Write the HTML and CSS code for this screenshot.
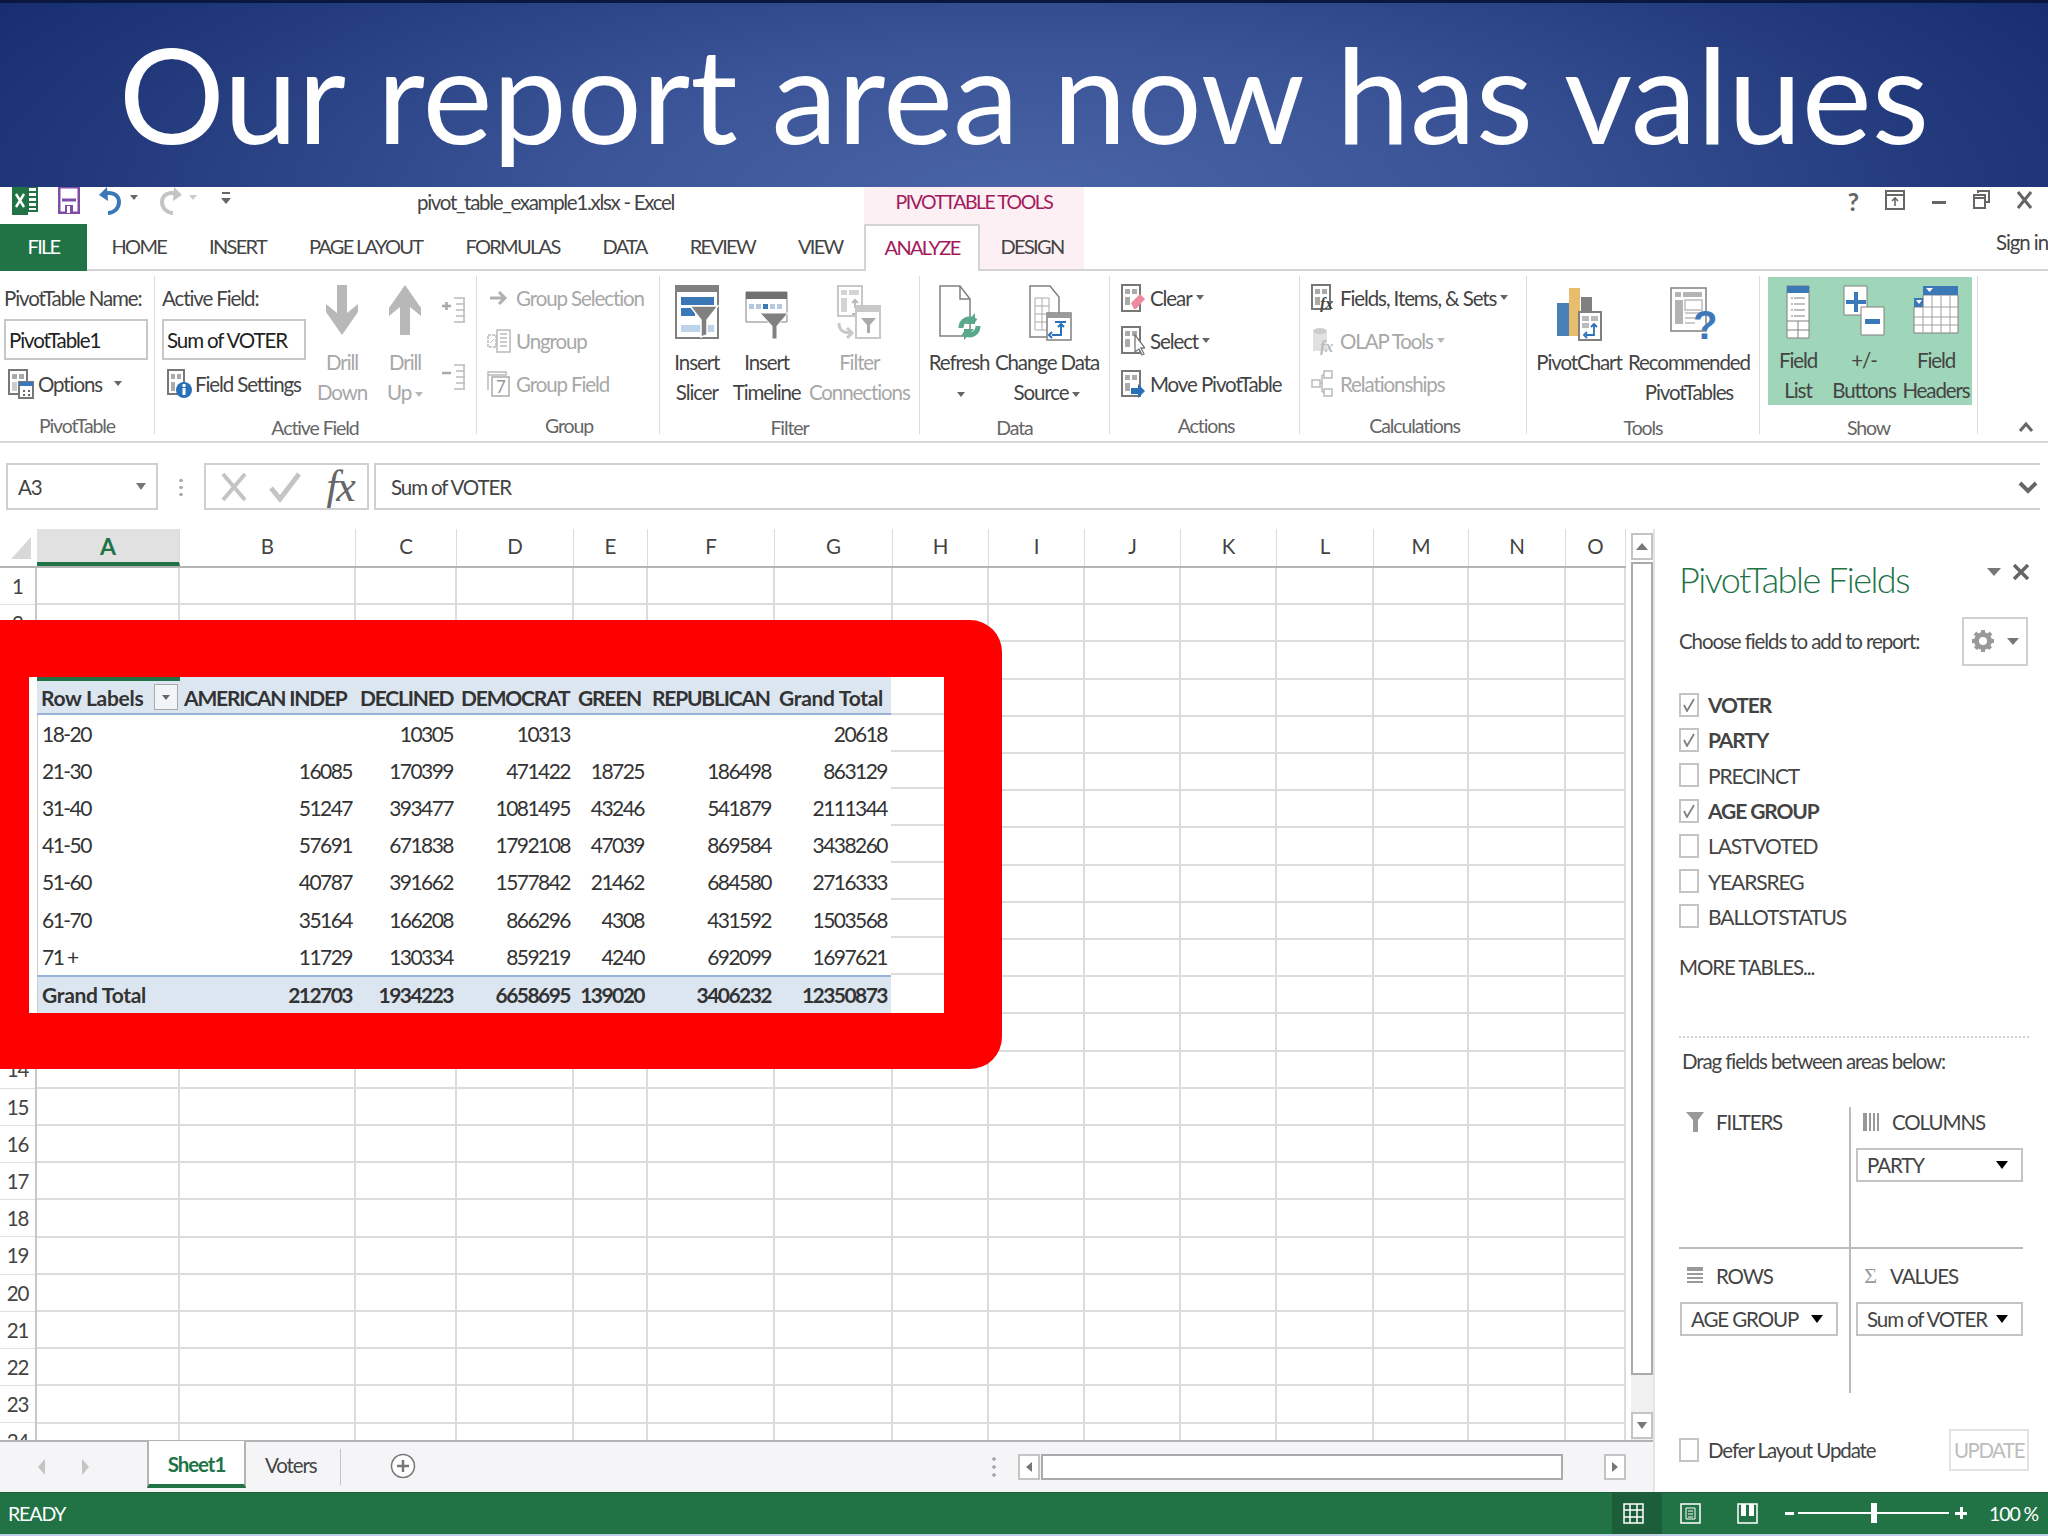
FILE: index.html
```html
<!DOCTYPE html>
<html lang="en">
<head>
    <meta charset="UTF-8">
    <title>Our report area now has values</title>
    <link rel="stylesheet" href="styles.css">
</head>
<body>
<div id="slide">
    <header class="banner"><h1>Our report area now has values</h1></header>

    <div class="titlebar">
        <div class="qat">
            <svg class="qat-excel" width="26" height="28" viewBox="0 0 26 28"><path d="M0 0h16v28H0z" fill="#217346"/><path d="M16 0h9v24h-9z" fill="#fff" stroke="#217346" stroke-width="2"/><path d="M17 5h7M17 10h7M17 15h7M17 20h7" stroke="#217346" stroke-width="2"/><path d="M4 7l8 13M12 7L4 20" stroke="#fff" stroke-width="2.4"/></svg>
            <svg class="qat-save" width="22" height="27" viewBox="0 0 22 27"><path d="M1 0h20v26H1z" fill="none" stroke="#7f4da8" stroke-width="3"/><path d="M4 13h14" stroke="#7f4da8" stroke-width="3"/><path d="M7 18h8v8H7z" fill="#7f4da8"/><path d="M9 19h3v7H9z" fill="#fff"/></svg>
            <svg class="qat-undo" width="24" height="30" viewBox="0 0 24 30"><path d="M5 7c8-3 15 1 15 8s-6 11-11 11" fill="none" stroke="#3b78b8" stroke-width="4"/><path d="M8 0L0 8l9 6z" fill="#3b78b8"/></svg>
            <span class="tri-sm"></span>
            <svg class="qat-redo" width="24" height="30" viewBox="0 0 24 30"><path d="M19 7c-8-3-15 1-15 8s6 11 11 11" fill="none" stroke="#c4c4c4" stroke-width="4"/><path d="M16 0l8 8-9 6z" fill="#c4c4c4"/></svg>
            <span class="tri-sm tri-light"></span>
            <svg class="qat-more" width="10" height="14" viewBox="0 0 10 14"><path d="M1 1h8v2H1zM0 7h10l-5 6z" fill="#666"/></svg>
        </div>
        <div class="doc-title">pivot_table_example1.xlsx - Excel</div>
        <div class="context-title">PIVOTTABLE TOOLS</div>
        <div class="win-controls">
            <span class="help">?</span>
            <svg width="20" height="20" viewBox="0 0 20 20"><path d="M1 1h18v18H1zM1 5h18" fill="none" stroke="#666" stroke-width="2"/><path d="M10 16V9M7 11l3-3 3 3" fill="none" stroke="#666" stroke-width="1.6"/></svg>
            <svg width="14" height="20" viewBox="0 0 14 20"><path d="M0 11h14v3H0z" fill="#666"/></svg>
            <svg width="17" height="20" viewBox="0 0 17 20"><path d="M5 3V1h11v11h-3M1 5h11v13H1zM1 8h11" fill="none" stroke="#666" stroke-width="2"/></svg>
            <svg width="15" height="20" viewBox="0 0 15 20"><path d="M1 2l13 16M14 2L1 18" stroke="#666" stroke-width="3"/></svg>
        </div>
    </div>

    <nav class="tabs">
        <span class="tab tab-file">FILE</span>
        <span class="tab">HOME</span>
        <span class="tab">INSERT</span>
        <span class="tab">PAGE LAYOUT</span>
        <span class="tab">FORMULAS</span>
        <span class="tab">DATA</span>
        <span class="tab">REVIEW</span>
        <span class="tab">VIEW</span>
        <span class="tab tab-analyze">ANALYZE</span>
        <span class="tab tab-design">DESIGN</span>
        <span class="sign-in">Sign in</span>
    </nav>

    <section class="ribbon">
        <div class="group g-pivot">
            <div class="group-body stack">
                <div class="row">PivotTable Name:</div>
                <div class="field-box">PivotTable1</div>
                <div class="row row-options">
                    <svg width="26" height="30" viewBox="0 0 26 30"><path d="M1 1h18v24H1z" fill="#fff" stroke="#777" stroke-width="2"/><path d="M4 5h5v5H4zM11 5h5v5h-5z" fill="#aaa"/><path d="M4 13h5v9H4z" fill="#ccc"/><path d="M11 13h14v16H11z" fill="#fff" stroke="#777" stroke-width="2"/><path d="M11 13h14v4H11z" fill="#3b78b8"/><path d="M15 21h2v2h-2zM20 21h2v2h-2zM15 25h2v2h-2zM20 25h2v2h-2z" fill="#666"/></svg>
                    <span class="opt-label">Options</span><span class="tri-sm"></span>
                </div>
            </div>
            <div class="group-label">PivotTable</div>
        </div>

        <div class="group g-active">
            <div class="group-body">
                <div class="stack active-col">
                    <div class="row">Active Field:</div>
                    <div class="field-box">Sum of VOTER</div>
                    <div class="row row-settings">
                        <svg width="26" height="30" viewBox="0 0 26 30"><path d="M1 1h16v24H1z" fill="#fff" stroke="#777" stroke-width="2"/><path d="M4 5h4v5H4zM10 5h4v5h-4zM4 13h4v9H4z" fill="#aaa"/><circle cx="17" cy="21" r="8" fill="#2a70b8"/><path d="M15.500 19h3v7h-3zM15.500 15h3v3h-3z" fill="#fff"/></svg>
                        <span>Field Settings</span>
                    </div>
                </div>
                <div class="big disabled w-drill-down">
                    <div class="big-icon"><svg width="34" height="50" viewBox="0 0 34 50"><path d="M12 0h10v28l11-9v8L17 50 1 27v-8l11 9z" fill="#b8b8b8"/></svg></div>
                    <span>Drill</span><span>Down</span>
                </div>
                <div class="big disabled w-drill-up">
                    <div class="big-icon"><svg width="34" height="50" viewBox="0 0 34 50"><path d="M12 50h10V22l11 9v-8L17 0 1 23v8l11-9z" fill="#b8b8b8"/></svg></div>
                    <span>Drill</span><span>Up<i class="tri-xs"></i></span>
                </div>
                <div class="expand-col">
                    <svg width="24" height="26" viewBox="0 0 24 26"><path d="M0 9h9M4.500 5v8" stroke="#a8a8a8" stroke-width="2.500"/><path d="M12 1h11M14 7h9M14 13h9M14 19h9M12 25h11M22 1v24" fill="none" stroke="#bbb" stroke-width="1.500"/></svg>
                    <svg width="24" height="26" viewBox="0 0 24 26"><path d="M0 9h9" stroke="#a8a8a8" stroke-width="2.500"/><path d="M12 1h11M14 7h9M14 13h9M14 19h9M12 25h11M22 1v24" fill="none" stroke="#bbb" stroke-width="1.500"/></svg>
                </div>
            </div>
            <div class="group-label">Active Field</div>
        </div>

        <div class="group g-group">
            <div class="group-body stack">
                <div class="row disabled"><svg class="ico" width="24" height="20" viewBox="0 0 24 20"><path d="M3 10h14M12 4l6 6-6 6" fill="none" stroke="#b0b0b0" stroke-width="3"/></svg>Group Selection</div>
                <div class="row disabled"><svg class="ico" width="24" height="24" viewBox="0 0 24 24"><path d="M10 1h13v22H10z" fill="none" stroke="#bbb" stroke-width="1.500"/><path d="M13 5h7M13 9h7M13 13h7M13 17h7" stroke="#bbb" stroke-width="1.500"/><path d="M1 6h8v12H1z" fill="none" stroke="#bbb" stroke-width="1.500" stroke-dasharray="3 1"/><path d="M3 14l4-4" stroke="#bbb"/></svg>Ungroup</div>
                <div class="row disabled"><svg class="ico" width="24" height="26" viewBox="0 0 24 26"><path d="M1 1h18v3H1zM1 1v18" fill="none" stroke="#bbb" stroke-width="1.500"/><path d="M5 6h17v19H5z" fill="#fff" stroke="#aaa" stroke-width="1.500"/><text x="9" y="22" class="ico-seven">7</text></svg>Group Field</div>
            </div>
            <div class="group-label">Group</div>
        </div>

        <div class="group g-filter">
            <div class="group-body">
                <div class="big w-slicer">
                    <div class="big-icon"><svg width="44" height="54" viewBox="0 0 44 54"><path d="M1 1h42v52H1z" fill="#fff" stroke="#808080" stroke-width="2"/><path d="M1 1h42v6H1z" fill="#808080"/><path d="M6 12h33v8H6z" fill="#3b78b8"/><path d="M6 23h14v8H6z" fill="#3b78b8"/><path d="M6 40h33v7H6z" fill="#bcd3ea"/><path d="M15 21h28L32 35v15l-6 2V35z" fill="#808080" stroke="#fff" stroke-width="1.500"/></svg></div>
                    <span>Insert</span><span>Slicer</span>
                </div>
                <div class="big w-timeline">
                    <div class="big-icon"><svg width="44" height="54" viewBox="0 0 44 54"><path d="M1 7h41v30H1z" fill="#fff" stroke="#808080" stroke-width="1"/><path d="M1 7h41v7H1z" fill="#707070"/><path d="M4 19h5v5H4zM11 19h5v5h-5zM25 19h5v5h-5zM32 19h5v5h-5z" fill="#b4c8e0"/><path d="M18 19h5v5h-5z" fill="#3b78b8"/><path d="M15 28h28L32 41v13h-5V41z" fill="#808080" stroke="#fff"/></svg></div>
                    <span>Insert</span><span>Timeline</span>
                </div>
                <div class="big disabled w-connect">
                    <div class="big-icon"><svg width="44" height="54" viewBox="0 0 44 54"><path d="M1 1h24v30H1z" fill="#fff" stroke="#c8c8c8" stroke-width="2"/><path d="M4 5h6v5H4zM12 5h10v5H12zM4 13h6v14H4z" fill="#d4d4d4"/><path d="M18 23v-8m-3 3l3-3 3 3M22 29h-7" fill="none" stroke="#bbb" stroke-width="2"/><path d="M19 21h24v32H19z" fill="#fff" stroke="#c8c8c8" stroke-width="2"/><path d="M19 21h24v6H19z" fill="#c8c8c8"/><path d="M24 33h15l-6 7v8h-3v-8z" fill="#aaa"/><path d="M2 38c0 8 5 10 12 10M10 43l5 5-5 5" fill="none" stroke="#c8c8c8" stroke-width="3"/></svg></div>
                    <span>Filter</span><span>Connections</span>
                </div>
            </div>
            <div class="group-label">Filter</div>
        </div>

        <div class="group g-data">
            <div class="group-body">
                <div class="big w-refresh">
                    <div class="big-icon"><svg width="44" height="56" viewBox="0 0 44 56"><path d="M3 1h20l10 13v37H3z" fill="#fff" stroke="#808080" stroke-width="1.500"/><path d="M23 1v13h10" fill="none" stroke="#808080" stroke-width="1.500"/><path d="M24 43c0-7 7-12 15-7M41 41c0 7-7 12-15 7" fill="none" stroke="#5aa88a" stroke-width="5"/><path d="M38 28v11h-10zM27 55V44h10z" fill="#5aa88a"/></svg></div>
                    <span>Refresh</span><span><i class="tri-xs tri-dark"></i></span>
                </div>
                <div class="big w-change">
                    <div class="big-icon"><svg width="44" height="56" viewBox="0 0 44 56"><path d="M2 1h20l9 11v40H2z" fill="#fff" stroke="#808080" stroke-width="1.500"/><path d="M7 13h14v32H7zM7 21h14M7 29h14M7 37h14M14 13v32" fill="none" stroke="#aaa"/><path d="M19 28h24v27H19z" fill="#fff" stroke="#808080" stroke-width="1.500"/><path d="M19 28h24v5H19z" fill="#999"/><path d="M27 37h10v-1M24 50h9V39m-3 3l3-3 3 3M24 47l-3 3 3 3" fill="none" stroke="#2a70b8" stroke-width="2"/></svg></div>
                    <span>Change Data</span><span>Source<i class="tri-xs tri-dark"></i></span>
                </div>
            </div>
            <div class="group-label">Data</div>
        </div>

        <div class="group g-actions">
            <div class="group-body stack">
                <div class="row"><svg class="ico" width="24" height="28" viewBox="0 0 24 28"><path d="M1 1h18v26H1z" fill="#fff" stroke="#777" stroke-width="2"/><path d="M4 5h5v5H4zM11 5h5v5h-5zM4 13h5v8H4z" fill="#aaa"/><path d="M10 19l9-9 5 5-9 10h-2z" fill="#ee8a9e"/></svg>Clear<i class="tri-xs tri-dark"></i></div>
                <div class="row"><svg class="ico" width="24" height="30" viewBox="0 0 24 30"><path d="M1 1h18v26H1z" fill="#fff" stroke="#777" stroke-width="2"/><path d="M4 5h5v5H4zM11 5h5v5h-5zM4 13h5v8H4z" fill="#aaa"/><path d="M14 9v17l4-3 3 6 2-1-3-6h4z" fill="#fff" stroke="#777" stroke-width="1.300"/></svg>Select<i class="tri-xs tri-dark"></i></div>
                <div class="row"><svg class="ico" width="24" height="28" viewBox="0 0 24 28"><path d="M1 1h18v25H1z" fill="#fff" stroke="#777" stroke-width="2"/><path d="M4 5h5v5H4zM11 5h5v5h-5zM4 13h5v8H4z" fill="#aaa"/><path d="M10 18h7v-4l7 7-7 7v-4h-7z" fill="#2a70b8"/></svg>Move PivotTable</div>
            </div>
            <div class="group-label">Actions</div>
        </div>

        <div class="group g-calc">
            <div class="group-body stack">
                <div class="row"><svg class="ico" width="24" height="28" viewBox="0 0 24 28"><path d="M1 1h18v24H1z" fill="#fff" stroke="#777" stroke-width="2"/><path d="M4 5h5v5H4zM11 5h5v5h-5zM4 13h5v8H4z" fill="#aaa"/><text x="9" y="25" class="ico-fx">fx</text></svg>Fields, Items, &amp; Sets<i class="tri-xs tri-dark"></i></div>
                <div class="row disabled"><svg class="ico" width="24" height="28" viewBox="0 0 24 28"><path d="M2 4v20h14V4z" fill="#e0e0e0"/><ellipse cx="9" cy="4" rx="7" ry="3" fill="#ccc"/><text x="9" y="25" class="ico-fx ico-fx-off">fx</text></svg>OLAP Tools<i class="tri-xs"></i></div>
                <div class="row disabled"><svg class="ico" width="24" height="28" viewBox="0 0 24 28"><path d="M13 1h8v7h-8zM1 10h8v7H1zM13 19h8v7h-8zM9 13h2M11 5v17M11 5h2M11 22h2" fill="none" stroke="#bbb" stroke-width="1.500"/></svg>Relationships</div>
            </div>
            <div class="group-label">Calculations</div>
        </div>

        <div class="group g-tools">
            <div class="group-body">
                <div class="big w-pchart">
                    <div class="big-icon"><svg width="46" height="56" viewBox="0 0 46 56"><path d="M1 18h12v33H1z" fill="#4a80b8"/><path d="M13 3h11v48H13z" fill="#e8bd6e"/><path d="M25 12h11v20H25z" fill="#808080"/><path d="M23 27h22v28H23z" fill="#fff" stroke="#808080" stroke-width="2"/><path d="M26 31h7v5h-7zM35 31h7v5h-7zM26 38h7v5h-7z" fill="#bbb"/><path d="M30 50h8V39m-3 3l3-3 3 3M31 47l-3 3 3 3" fill="none" stroke="#2a70b8" stroke-width="1.800"/></svg></div>
                    <span>PivotChart</span>
                </div>
                <div class="big w-recommend">
                    <div class="big-icon"><svg width="46" height="56" viewBox="0 0 46 56"><path d="M1 3h35v43H1z" fill="#fff" stroke="#808080" stroke-width="1.500"/><path d="M5 7h6v5H5zM13 7h19v5H13zM5 15h8v24H5z" fill="#b4b4b4"/><path d="M15 15h17v10H15zM15 28h17M15 33h10M15 38h10" fill="none" stroke="#ccc" stroke-width="2"/><text x="23" y="54" class="ico-question">?</text></svg></div>
                    <span>Recommended</span><span>PivotTables</span>
                </div>
            </div>
            <div class="group-label">Tools</div>
        </div>

        <div class="group g-show">
            <div class="group-body show-box">
                <div class="big w-flist">
                    <div class="big-icon"><svg width="24" height="54" viewBox="0 0 24 54"><path d="M1 1h22v52H1z" fill="#fff" stroke="#808080" stroke-width="1"/><path d="M1 1h22v7H1z" fill="#3b78b8"/><path d="M5 13h14M5 19h14M5 25h14M5 31h14" stroke="#aaa" stroke-width="1.500" stroke-dasharray="2 1 11 0"/><path d="M1 36h22M12 36v17M1 45h22" stroke="#808080"/></svg></div>
                    <span>Field</span><span>List</span>
                </div>
                <div class="big w-plus">
                    <div class="big-icon"><svg width="42" height="54" viewBox="0 0 42 54"><path d="M1 1h23v29H1z" fill="#fff" stroke="#808080"/><path d="M11 7h4v8h8v4h-8v8h-4v-8H3v-4h8z" fill="#3b78b8"/><path d="M18 22h23v28H18z" fill="#fff" stroke="#808080"/><path d="M22 34h15v5H22z" fill="#3b78b8"/></svg></div>
                    <span>+/-</span><span>Buttons</span>
                </div>
                <div class="big w-fhead">
                    <div class="big-icon"><svg width="46" height="50" viewBox="0 0 46 50"><path d="M10 10h35v38H1V22h9z" fill="#fff" stroke="#808080"/><path d="M1 32h44M1 40h44M10 22h35M10 10v38M19 10v38M28 10v38M37 10v38" stroke="#a0a0a0"/><path d="M10 1h35v9H10z" fill="#3b78b8"/><path d="M1 13h9v9H1z" fill="#3b78b8"/><path d="M13 3h7l-3.500 4zM3 15h6l-3 4z" fill="#fff"/></svg></div>
                    <span>Field</span><span>Headers</span>
                </div>
            </div>
            <div class="group-label">Show</div>
        </div>

        <svg class="collapse" width="16" height="12" viewBox="0 0 16 12"><path d="M2 10l6-7 6 7" fill="none" stroke="#666" stroke-width="3"/></svg>
    </section>

    <section class="formula-bar">
        <div class="name-box"><span>A3</span><span class="tri-md"></span></div>
        <div class="fb-dots"></div>
        <div class="fb-buttons">
            <svg width="28" height="30" viewBox="0 0 28 30"><path d="M3 2l22 26M25 2L3 28" stroke="#c4c4c4" stroke-width="4"/></svg>
            <svg width="32" height="30" viewBox="0 0 32 30"><path d="M2 16l9 11L30 2" fill="none" stroke="#c4c4c4" stroke-width="5"/></svg>
            <i class="fx">fx</i>
        </div>
        <div class="fb-input">Sum of VOTER
            <svg class="fb-chevron" width="20" height="14" viewBox="0 0 20 14"><path d="M2 3l8 8 8-8" fill="none" stroke="#666" stroke-width="4"/></svg>
        </div>
    </section>

    <main class="workspace">
        <div class="sheet-area">
            <div class="sheet-top">
                <div class="sheet">
                    <div class="col-heads">
                        <span class="corner"><svg width="26" height="26" viewBox="0 0 26 26"><path d="M22 4v22H2z" fill="#d8d8d8"/></svg></span>
                        <span class="active">A</span><span>B</span><span>C</span><span>D</span><span>E</span><span>F</span><span>G</span><span>H</span><span>I</span><span>J</span><span>K</span><span>L</span><span>M</span><span>N</span><span>O</span>
                    </div>
                    <div class="sheet-body">
                        <div class="row-heads">
                            <span>1</span><span>2</span><span>3</span><span>4</span><span>5</span><span>6</span><span>7</span><span>8</span><span>9</span><span>10</span><span>11</span><span>12</span><span>13</span><span>14</span><span>15</span><span>16</span><span>17</span><span>18</span><span>19</span><span>20</span><span>21</span><span>22</span><span>23</span><span>24</span>
                        </div>
                        <div class="cells">
                            <i></i><i></i><i></i><i></i><i></i><i></i><i></i><i></i><i></i><i></i><i></i><i></i><i></i><i></i><i></i>
                        </div>
                    </div>
                </div>
                <div class="vscroll">
                    <button class="sb-btn"><span class="tri-up"></span></button>
                    <div class="sb-thumb"></div>
                    <button class="sb-btn sb-end"><span class="tri-md"></span></button>
                </div>
            </div>
            <div class="sheet-tabs">
                <svg class="nav-arrow" width="8" height="16" viewBox="0 0 8 16"><path d="M7 0v16L0 8z" fill="#c4c4c4"/></svg>
                <svg class="nav-arrow nav-next" width="8" height="16" viewBox="0 0 8 16"><path d="M1 0v16l7-8z" fill="#c4c4c4"/></svg>
                <span class="sheet-tab current">Sheet1</span>
                <span class="sheet-tab other">Voters</span>
                <svg class="add-sheet" width="26" height="26" viewBox="0 0 26 26"><circle cx="13" cy="13" r="11.500" fill="#fff" stroke="#777" stroke-width="1.500"/><path d="M13 7v12M7 13h12" stroke="#777" stroke-width="2.500"/></svg>
                <span class="tab-dots"></span>
                <div class="hscroll">
                    <button class="sb-btn"><span class="tri-left"></span></button>
                    <div class="hs-thumb"></div>
                    <button class="sb-btn sb-end"><span class="tri-right"></span></button>
                </div>
            </div>
        </div>

        <aside class="pane">
            <div class="pane-head">
                <h2>PivotTable Fields</h2>
                <span class="tri-lg"></span>
                <svg width="16" height="16" viewBox="0 0 16 16"><path d="M1 1l14 14M15 1L1 15" stroke="#666" stroke-width="3.500"/></svg>
            </div>
            <div class="pane-choose">
                <span>Choose fields to add to report:</span>
                <div class="gear-box">
                    <svg width="22" height="22" viewBox="0 0 22 22"><circle cx="11" cy="11" r="6.500" fill="none" stroke="#999" stroke-width="5"/><path d="M11 0v22M0 11h22M3 3l16 16M19 3L3 19" stroke="#999" stroke-width="4" stroke-dasharray="4 14"/></svg>
                    <span class="tri-lg tri-lg-sm"></span>
                </div>
            </div>
            <ul class="field-list">
                <li class="on"><span class="cb"><svg width="14" height="14" viewBox="0 0 14 14"><path d="M2 7l3 6 7-12" fill="none" stroke="#808080" stroke-width="1.800"/></svg></span>VOTER</li>
                <li class="on"><span class="cb"><svg width="14" height="14" viewBox="0 0 14 14"><path d="M2 7l3 6 7-12" fill="none" stroke="#808080" stroke-width="1.800"/></svg></span>PARTY</li>
                <li><span class="cb"></span>PRECINCT</li>
                <li class="on"><span class="cb"><svg width="14" height="14" viewBox="0 0 14 14"><path d="M2 7l3 6 7-12" fill="none" stroke="#808080" stroke-width="1.800"/></svg></span>AGE GROUP</li>
                <li><span class="cb"></span>LASTVOTED</li>
                <li><span class="cb"></span>YEARSREG</li>
                <li><span class="cb"></span>BALLOTSTATUS</li>
            </ul>
            <div class="more-tables">MORE TABLES...</div>
            <div class="drag-note">Drag fields between areas below:</div>
            <div class="areas">
                <div class="area a-filters">
                    <div class="area-head"><svg width="18" height="20" viewBox="0 0 18 20"><path d="M0 0h18l-6 8v12H7V8z" fill="#999"/></svg>FILTERS</div>
                </div>
                <div class="area a-columns">
                    <div class="area-head"><svg width="18" height="20" viewBox="0 0 18 20"><path d="M1 1h4v18H1zM7 1h2v18H7zM11 1h2v18h-2zM15 1h2v18h-2z" fill="#999"/></svg>COLUMNS</div>
                    <div class="pill">PARTY<span class="tri-black"></span></div>
                </div>
                <div class="area a-rows">
                    <div class="area-head"><svg width="18" height="18" viewBox="0 0 18 18"><path d="M1 0h16v4H1zM1 6h16v2H1zM1 10h16v2H1zM1 14h16v2H1z" fill="#999"/></svg>ROWS</div>
                    <div class="pill">AGE GROUP<span class="tri-black"></span></div>
                </div>
                <div class="area a-values">
                    <div class="area-head"><span class="sigma">Σ</span>VALUES</div>
                    <div class="pill">Sum of VOTER<span class="tri-black"></span></div>
                </div>
            </div>
            <div class="pane-foot">
                <span class="cb"></span><span class="defer">Defer Layout Update</span>
                <button class="update">UPDATE</button>
            </div>
        </aside>
    </main>

    <footer class="status">
        <span class="ready">READY</span>
        <div class="view-btn current">
            <svg width="21" height="21" viewBox="0 0 21 21"><path d="M1 1h19v19H1zM1 7h19M1 14h19M7 1v19M14 1v19" fill="none" stroke="#fff" stroke-width="1.500"/></svg>
        </div>
        <svg class="view-ico" width="21" height="21" viewBox="0 0 21 21"><path d="M1 1h19v19H1z" fill="none" stroke="#fff" stroke-width="1.500"/><path d="M6 5h9v11H6zM8 8h5M8 11h5M8 14h5" fill="none" stroke="#fff"/></svg>
        <svg class="view-ico" width="21" height="21" viewBox="0 0 21 21"><path d="M1 1h19v19H1z" fill="none" stroke="#fff" stroke-width="1.500"/><path d="M4 1h5v12H4zM12 1h5v12h-5z" fill="#fff"/></svg>
        <div class="zoom-slider">
            <b class="z-minus"></b>
            <div class="z-track"><b class="z-thumb"></b></div>
            <b class="z-plus"></b>
        </div>
        <span class="zoom-pct">100 %</span>
    </footer>
    <div class="desktop-edge"></div>

    <!-- red callout over the sheet -->
    <div class="callout">
        <table class="pivot">
            <colgroup><col class="c-gut"><col class="c-a"><col class="c-b"><col class="c-c"><col class="c-d"><col class="c-e"><col class="c-f"><col class="c-g"><col></colgroup>
            <thead>
                <tr>
                    <td class="gut"></td>
                    <th class="label-head"><div class="filter-cell">Row Labels<span class="filter-btn"><span class="tri-sm"></span></span></div></th>
                    <th>AMERICAN INDEP</th><th>DECLINED</th><th>DEMOCRAT</th><th>GREEN</th><th>REPUBLICAN</th><th class="head-total">Grand Total</th>
                    <td class="blank"></td>
                </tr>
            </thead>
            <tbody>
                <tr><td class="gut"></td><td class="lab">18-20</td><td></td><td>10305</td><td>10313</td><td></td><td></td><td>20618</td><td class="blank"></td></tr>
                <tr><td class="gut"></td><td class="lab">21-30</td><td>16085</td><td>170399</td><td>471422</td><td>18725</td><td>186498</td><td>863129</td><td class="blank"></td></tr>
                <tr><td class="gut"></td><td class="lab">31-40</td><td>51247</td><td>393477</td><td>1081495</td><td>43246</td><td>541879</td><td>2111344</td><td class="blank"></td></tr>
                <tr><td class="gut"></td><td class="lab">41-50</td><td>57691</td><td>671838</td><td>1792108</td><td>47039</td><td>869584</td><td>3438260</td><td class="blank"></td></tr>
                <tr><td class="gut"></td><td class="lab">51-60</td><td>40787</td><td>391662</td><td>1577842</td><td>21462</td><td>684580</td><td>2716333</td><td class="blank"></td></tr>
                <tr><td class="gut"></td><td class="lab">61-70</td><td>35164</td><td>166208</td><td>866296</td><td>4308</td><td>431592</td><td>1503568</td><td class="blank"></td></tr>
                <tr><td class="gut"></td><td class="lab">71 +</td><td>11729</td><td>130334</td><td>859219</td><td>4240</td><td>692099</td><td>1697621</td><td class="blank"></td></tr>
            </tbody>
            <tfoot>
                <tr><td class="gut"></td><td class="lab total-lab">Grand Total</td><td>212703</td><td>1934223</td><td>6658695</td><td>139020</td><td>3406232</td><td>12350873</td><td class="blank"></td></tr>
            </tfoot>
        </table>
    </div>
</div>
</body>
</html>
```

FILE: styles.css
```css
* { box-sizing: border-box; }
html, body { margin: 0; padding: 0; }
body {
    width: 2048px;
    height: 1536px;
    overflow: hidden;
    background: #fff;
    font-family: Lato, sans-serif;
    font-size: 20.500px;
    letter-spacing: -1.100px;
    color: #444;
}
#slide {
    position: relative;
    width: 2048px;
    height: 1536px;
    overflow: hidden;
    display: flex;
    flex-direction: column;
}

/* triangles */
.tri-sm, .tri-xs, .tri-md, .tri-lg, .tri-black, .tri-up {
    display: inline-block;
    width: 0;
    height: 0;
    border-left: 4px solid transparent;
    border-right: 4px solid transparent;
    border-top: 5px solid #666;
}
.tri-light { border-top-color: #ccc; }
.tri-xs { border-top: 5px solid #b8b8b8; margin-left: 4px; vertical-align: middle; }
.tri-dark { border-top-color: #666; }
.tri-md { border-left-width: 5px; border-right-width: 5px; border-top: 7px solid #777; }
.tri-lg { border-left-width: 7px; border-right-width: 7px; border-top: 8px solid #777; }
.tri-lg-sm { border-left-width: 6px; border-right-width: 6px; border-top-width: 7px; }
.tri-black { border-left-width: 6px; border-right-width: 6px; border-top: 8px solid #000; }
.tri-up { border-left-width: 6px; border-right-width: 6px; border-top: 0; border-bottom: 7px solid #777; }
.tri-left, .tri-right {
    display: inline-block;
    width: 0;
    height: 0;
    border-top: 5px solid transparent;
    border-bottom: 5px solid transparent;
}
.tri-left { border-right: 6px solid #777; }
.tri-right { border-left: 6px solid #777; }

/* banner */
.banner {
    flex: 0 0 187px;
    height: 187px;
    background: radial-gradient(ellipse 1300px 420px at 50% 105%, #4a65a6 0%, #3a5497 35%, #233b7d 70%, #12286b 100%);
    border-top: 3px solid #0a1740;
    text-align: center;
}
.banner h1 {
    margin: 0;
    font-family: Lato, sans-serif;
    font-weight: 400;
    font-size: 132.500px;
    letter-spacing: 0;
    line-height: 1;
    padding-top: 24px;
    color: #fff;
    white-space: nowrap;
}

/* title row */
.titlebar {
    flex: 0 0 37px;
    display: flex;
    height: 37px;
    background: #fff;
}
.qat {
    width: 417px;
    display: flex;
    align-items: flex-start;
    padding-left: 12px;
}
.qat-save { margin-left: 20px; }
.qat-undo { margin-left: 19px; }
.qat-redo { margin-left: 20px; }
.qat .tri-sm { margin: 8px 0 0 7px; }
.qat-more { margin: 4px 0 0 24px; }
.doc-title { width: 447px; line-height: 30px; letter-spacing: -1.300px; }
.context-title {
    width: 220px;
    background: #fdf0f5;
    color: #a3195b;
    line-height: 30px;
    text-align: center;
    white-space: nowrap;
    font-size: 19.500px;
    letter-spacing: -1.500px;
}
.win-controls {
    flex: 1;
    display: flex;
    justify-content: flex-end;
    align-items: flex-start;
    gap: 27px;
    padding: 3px 16px 0 0;
}
.help { font-weight: 700; font-size: 25px; line-height: 22px; color: #666; }

/* ribbon tabs */
.tabs {
    flex: 0 0 47px;
    display: flex;
    align-items: stretch;
    border-bottom: 2px solid #d4d4d4;
    height: 47px;
}
.tab {
    padding: 0 21.500px;
    line-height: 44px;
    font-size: 20px;
    letter-spacing: -1.700px;
    color: #444;
    white-space: nowrap;
}
.tab-file {
    width: 87px;
    margin-right: 3px;
    padding: 0;
    text-align: center;
    background: #217346;
    color: #fff;
    height: 47px;
}
.tab-analyze {
    width: 116px;
    padding: 0;
    text-align: center;
    color: #a3195b;
    background: #fff;
    border: 2px solid #d4d4d4;
    border-bottom: 0;
    height: 47px;
    line-height: 42px;
}
.tab-design { width: 104px; padding: 0; text-align: center; background: #fdf0f5; }
.sign-in { margin-left: auto; line-height: 36px; white-space: nowrap; }

/* ribbon body */
.ribbon {
    position: relative;
    flex: 0 0 172px;
    height: 172px;
    display: flex;
    padding-top: 5px;
    border-bottom: 2px solid #d8d8d8;
}
.group {
    display: flex;
    flex-direction: column;
    height: 158px;
    border-right: 1px solid #dcdcdc;
}
.g-pivot { width: 155px; padding-left: 4px; }
.g-active { width: 322px; padding-left: 7px; }
.g-group { width: 183px; padding-left: 10px; }
.g-filter { width: 260px; }
.g-data { width: 190px; }
.g-actions { width: 190px; padding-left: 11px; }
.g-calc { width: 227px; padding-left: 11px; }
.g-tools { width: 233px; }
.g-show { width: 218px; padding-left: 8px; }
.group-body { display: flex; height: 131px; }
.group-label {
    margin-left: -8px;
    line-height: 22px;
    margin-top: 10px;
    text-align: center;
    font-size: 19.500px;
    color: #666;
}
.g-pivot .group-label { margin-left: -4px; }
.g-filter .group-label, .g-data .group-label, .g-tools .group-label { margin-left: 0; }
.stack { flex-direction: column; display: flex; }
.row {
    display: flex;
    align-items: center;
    height: 43px;
    white-space: nowrap;
}
.ico { margin-right: 5px; flex: none; }
.disabled { color: #a8a8a8; }
.field-box {
    width: 144px;
    height: 41px;
    line-height: 38px;
    margin-bottom: 2px;
    padding-left: 3px;
    border: 2px solid #c8c8c8;
    color: #222;
    white-space: nowrap;
}
.row-options { padding-left: 4px; }
.opt-label { margin: 0 12px 0 4px; }
.row-settings { padding-left: 5px; gap: 2px; }
.active-col { width: 150px; }
.ico-seven { font-size: 17px; fill: #999; letter-spacing: 0; }
.ico-fx { font: italic 700 16px "Liberation Serif", serif; fill: #444; letter-spacing: 0; }
.ico-fx-off { fill: #bbb; }
.ico-question { font: 700 40px "Liberation Sans", sans-serif; fill: #3b78b8; letter-spacing: 0; }

.big {
    display: flex;
    flex-direction: column;
    align-items: center;
    padding-top: 7px;
    line-height: 30px;
    white-space: nowrap;
}
.big span { height: 30px; }
.big-icon { height: 64px; display: flex; align-items: flex-start; justify-content: center; padding-top: 2px; }
.w-drill-down { width: 60px; }
.w-drill-up { width: 66px; }
.expand-col { display: flex; flex-direction: column; gap: 41px; margin: 21px 0 0 4px; }
.w-slicer { width: 74px; }
.w-timeline { width: 66px; }
.w-connect { width: 120px; }
.w-refresh { width: 78px; }
.w-change { width: 98px; }
.w-change .big-icon { padding-left: 6px; }
.w-pchart { width: 104px; }
.w-recommend { width: 116px; }
.w-recommend .big-icon { padding-left: 8px; }
.show-box { width: 204px; height: 128px; background: #9fd5b8; margin-top: 1px; }
.w-flist { width: 60px; }
.w-plus { width: 72px; }
.w-fhead { width: 72px; }
.show-box .big { padding-top: 6px; }
.collapse { position: absolute; left: 2018px; top: 150px; }
.g-show .group-label { margin-top: 12px; }

/* formula bar */
.formula-bar {
    flex: 0 0 86px;
    height: 86px;
    display: flex;
    padding: 20px 8px 19px 6px;
    align-items: stretch;
}
.name-box {
    width: 152px;
    border: 2px solid #cfcfcf;
    display: flex;
    justify-content: space-between;
    align-items: center;
    padding: 0 10px;
}
.fb-dots { width: 46px; margin: 14px 0; background: radial-gradient(circle, #aaa 1.500px, transparent 2px) center top / 4px 7px repeat-y; }
.fb-buttons {
    width: 165px;
    border: 2px solid #cfcfcf;
    display: flex;
    align-items: center;
    padding-left: 14px;
    gap: 21px;
    overflow: hidden;
}
.fx { font: italic 44px/44px "Liberation Serif", serif; color: #666; margin-left: 4px; letter-spacing: -2px; }
.fb-input {
    flex: 1;
    margin-left: 5px;
    border: 2px solid #cfcfcf;
    border-right: 0;
    display: flex;
    justify-content: space-between;
    align-items: center;
    padding: 0 2px 0 15px;
}

/* sheet */
.workspace { flex: 0 0 963px; height: 963px; display: flex; }
.sheet-area { width: 1659px; display: flex; flex-direction: column; border-right: 2px solid #e4e4e4; }
.sheet-top { flex: 1; display: flex; min-height: 0; overflow: hidden; }
.sheet {
    --cols: 143px 176px 101px 117px 74px 127px 118px 96px 96px 96px 96px 97px 95px 97px 60px;
    width: 1626px;
    display: flex;
    flex-direction: column;
}
.col-heads {
    flex: 0 0 37px;
    display: grid;
    grid-template-columns: 37px var(--cols);
    border-bottom: 2px solid #b4b4b4;
    text-align: center;
    line-height: 34px;
    letter-spacing: 0;
}
.col-heads span { border-right: 1px solid #dcdcdc; }
.col-heads .corner { border-right: 0; padding: 4px 0 0 7px; line-height: 0; }
.col-heads .active {
    background: #e1e1e1;
    color: #217346;
    font-weight: 700;
    font-size: 23px;
    border-bottom: 4px solid #217346;
    height: 37px;
}
.sheet-body { flex: 1; display: flex; min-height: 0; overflow: hidden; }
.row-heads {
    width: 37px;
    flex: none;
    display: flex;
    flex-direction: column;
    text-align: center;
    border-right: 2px solid #c8c8c8;
}
.row-heads span {
    flex: 0 0 37.200px;
    height: 37.200px;
    line-height: 37px;
    border-bottom: 1px solid #e0e0e0;
}
.cells {
    flex: 1;
    display: grid;
    grid-template-columns: var(--cols);
    background: repeating-linear-gradient(to bottom, #fff 0, #fff 35.200px, #dcdcdc 35.200px, #dcdcdc 37.200px);
}
.cells i { border-right: 2px solid #dcdcdc; }

.vscroll {
    width: 22px;
    margin-left: 5px;
    display: flex;
    flex-direction: column;
    padding-top: 4px;
    background: linear-gradient(#fff 0, #fff 92%, #f0f0f0 92%);
}
.sb-btn {
    flex: none;
    width: 22px;
    height: 27px;
    padding: 0;
    border: 2px solid #c4c4c4;
    background: #fff;
    display: flex;
    align-items: center;
    justify-content: center;
}
.sb-thumb { height: 813px; margin-top: 2px; border: 2px solid #aaa; background: #fff; }
.sb-end { margin-top: auto; margin-bottom: 1px; }

.sheet-tabs {
    flex: 0 0 52px;
    display: flex;
    align-items: center;
    border-top: 2px solid #b4b4b4;
    background: #f5f5f7;
    position: relative;
}
.nav-arrow { margin-left: 38px; }
.nav-next { margin-left: 35px; }
.sheet-tab { display: block; height: 50px; line-height: 46px; }
.sheet-tab.current {
    width: 99px;
    margin: -5px 0 0 58px;
    height: 47px;
    text-align: center;
    background: #fff;
    color: #217346;
    font-weight: 700;
    border-bottom: 4px solid #217346;
    border-left: 2px solid #b4b4b4;
    border-right: 2px solid #b4b4b4;
}
.sheet-tab.other {
    width: 95px;
    padding-left: 19px;
    height: 36px;
    line-height: 33px;
    border-right: 1px solid #c4c4c4;
}
.add-sheet { margin: -2px 0 0 49px; }
.tab-dots { width: 4px; height: 24px; margin-left: 576px; background: radial-gradient(circle, #aaa 1.500px, transparent 2px) center top / 4px 8px repeat-y; }
.hscroll {
    display: flex;
    align-items: center;
    margin-left: 22px;
    width: 608px;
    height: 26px;
}
.hscroll .sb-btn { height: 26px; }
.hs-thumb { width: 522px; height: 26px; border: 2px solid #aaa; background: #fff; margin-left: 1px; }
.hscroll .sb-end { margin: 0 0 0 auto; }

/* field pane */
.pane { flex: 1; padding: 0 20px 0 24px; position: relative; }
.pane-head { display: flex; align-items: center; height: 102px; }
.pane-head h2 {
    margin: 0;
    font-weight: 300;
    font-size: 36px;
    letter-spacing: -1.500px;
    color: #217346;
    width: 308px;
    height: 52px;
    line-height: 50px;
}
.pane-head .tri-lg { margin: -16px 12px 0 0; }
.pane-head svg { margin-top: -16px; }
.pane-choose { display: flex; justify-content: space-between; align-items: center; height: 50px; margin-top: -15px; }
.gear-box {
    width: 66px;
    height: 49px;
    margin-right: 1px;
    border: 2px solid #cfcfcf;
    display: flex;
    align-items: center;
    justify-content: center;
    gap: 13px;
}
.field-list { list-style: none; margin: 21px 0 0; padding: 0; }
.field-list li { display: flex; align-items: center; height: 35.300px; font-size: 21px; }
.field-list li.on { font-weight: 700; }
.cb {
    width: 20px;
    height: 24px;
    margin-right: 9px;
    border: 2px solid #c4c4c4;
    display: inline-flex;
    align-items: center;
    justify-content: center;
    background: #fff;
    flex: none;
}
.more-tables { margin-top: 18px; line-height: 30px; }
.drag-note {
    margin-top: 54px;
    padding: 10px 0 0 3px;
    border-top: 2px dotted #d0d0d0;
    line-height: 26px;
    white-space: nowrap;
}
.areas {
    display: grid;
    grid-template-columns: 172px 172px;
    grid-template-rows: 142px 144px;
    margin-top: 33px;
}
.a-filters, .a-rows { border-right: 2px solid #bbb; }
.a-filters, .a-columns { border-bottom: 2px solid #bbb; }
.a-filters, .a-rows { padding-left: 1px; padding-right: 11px; }
.a-columns, .a-values { padding-left: 5px; }
.area-head { display: flex; align-items: center; height: 30px; padding-left: 6px; gap: 12px; }
.a-rows .area-head, .a-values .area-head { margin-top: 12px; }
.area-head svg { flex: none; }
.sigma { width: 16px; font: 22px "Liberation Serif", serif; color: #999; text-align: center; }
.pill {
    display: flex;
    justify-content: space-between;
    align-items: center;
    height: 34px;
    margin-top: 11px;
    padding: 0 13px 0 9px;
    border: 2px solid #c4c4c4;
    background: #fff;
    white-space: nowrap;
}
.pane-foot { display: flex; align-items: center; margin-top: 36px; padding-left: 0; height: 42px; }
.pane-foot .defer { flex: 1; }
.update {
    width: 80px;
    height: 42px;
    padding: 0;
    border: 2px solid #e2e2e2;
    background: #fff;
    font: inherit;
    letter-spacing: -1.500px;
    color: #bdbdbd;
}

/* status bar */
.status {
    flex: 0 0 42px;
    height: 42px;
    display: flex;
    align-items: center;
    background: #217346;
    color: #fff;
    border-top: 1px solid #1c5f3a;
    font-size: 19.500px;
    padding-bottom: 1px;
}
.ready { width: 1612px; padding-left: 8px; }
.view-btn { width: 50px; height: 41px; background: #1b5e39; display: flex; align-items: center; padding-left: 11px; }
.status .view-ico { margin-left: 18px; }
.status .view-ico + .view-ico { margin-left: 36px; }
.zoom-slider { display: flex; align-items: center; margin-left: 27px; }
.z-minus { width: 9px; height: 3px; background: #fff; }
.z-track { position: relative; width: 151px; height: 2px; margin: 0 6px 0 4px; background: #fff; }
.z-thumb { position: absolute; left: 73px; top: -9px; width: 6px; height: 20px; background: #fff; }
.z-plus { width: 12px; height: 12px; background: linear-gradient(#fff, #fff) center / 12px 3px no-repeat, linear-gradient(#fff, #fff) center / 3px 12px no-repeat; }
.zoom-pct { margin-left: 22px; white-space: nowrap; }
.desktop-edge { flex: 1; background: #b9cde4; }

/* red callout with the pivot table */
.callout {
    position: absolute;
    left: -69px;
    top: 620px;
    width: 1071px;
    height: 449px;
    border-style: solid;
    border-color: #f00;
    border-width: 57px 58px 56px 98px;
    border-radius: 32px;
    background: #fff;
}
.pivot {
    border-collapse: separate;
    border-spacing: 0;
    table-layout: fixed;
    width: 915px;
    font-size: 21px;
    letter-spacing: -1.550px;
    color: #333;
}
.c-gut { width: 8px; }
.c-a { width: 143px; }
.c-b { width: 176px; }
.c-c { width: 101px; }
.c-d { width: 117px; }
.c-e { width: 74px; }
.c-f { width: 127px; }
.c-g { width: 116px; }
.pivot th, .pivot td {
    height: 37.100px;
    padding: 0 4px 0 0;
    text-align: right;
    white-space: nowrap;
    font-weight: 400;
}
.pivot th {
    height: 38px;
    padding: 0 0 0 4px;
    text-align: left;
    font-weight: 700;
    letter-spacing: -1.200px;
    background: #dce6f1;
    border-top: 4px solid #dce6f1;
    border-bottom: 2px solid #95b3d7;
}
.pivot .gut { background: #fff; padding: 0; border: 0; }
.pivot td.blank { background: #fff; border-bottom: 2px solid #dcdcdc; }
.pivot tbody .gut + td, .pivot tfoot .gut + td { border-left: 1px solid #ccc; }
.pivot .lab { text-align: left; padding-left: 4px; }
.pivot .head-total, .pivot .total-lab, .pivot .label-head { letter-spacing: -0.300px; }
.filter-cell { display: flex; justify-content: space-between; align-items: center; padding-right: 2px; }
.pivot .label-head { border-top-color: #217346; }
.filter-btn {
    display: flex;
    align-items: center;
    justify-content: center;
    width: 24px;
    height: 26px;
    border: 1.500px solid #aaa;
    background: #f2f5f8;
}
.pivot tfoot td { height: 38px; font-weight: 700; background: #dce6f1; border-top: 2px solid #95b3d7; }
.pivot tfoot .gut { background: #fff; border-top: 0; }
.pivot tfoot .blank { background: #fff; border-top: 0; border-bottom: 0; }
```
